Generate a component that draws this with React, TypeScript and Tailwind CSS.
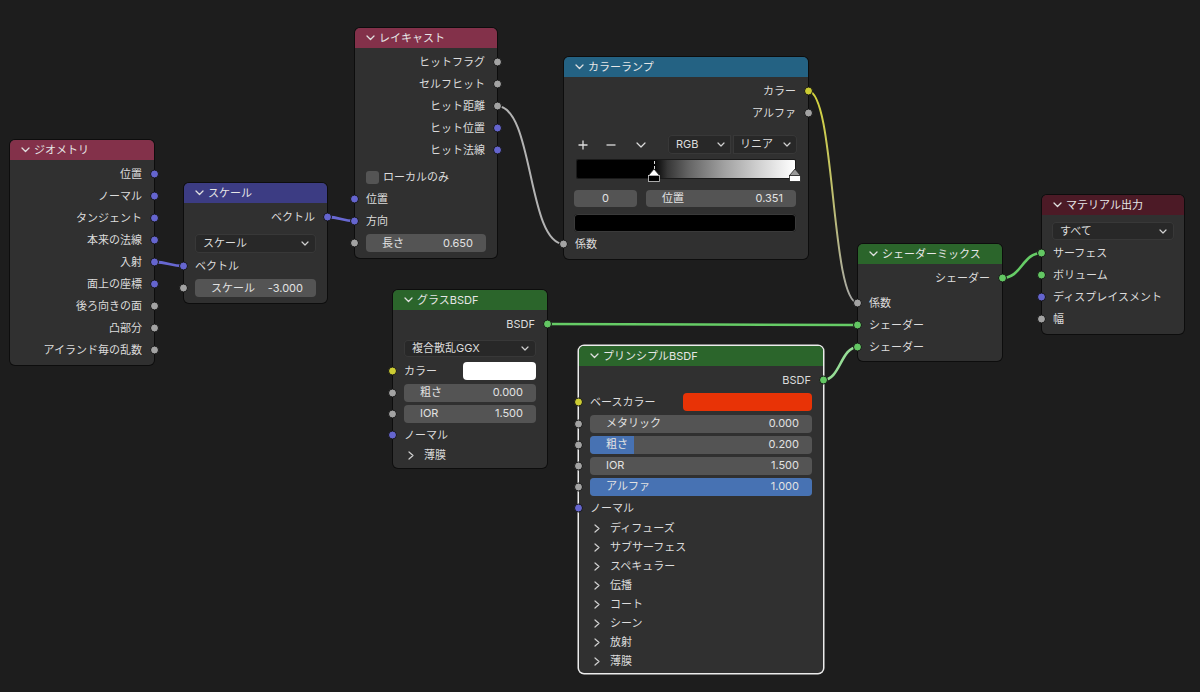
import React from "react";

type SockT = "vec" | "flt" | "col" | "sh";
const sockColor: Record<SockT, string> = {
  vec: "bg-[#6565cf]",
  flt: "bg-[#a3a3a3]",
  col: "bg-[#cccc33]",
  sh: "bg-[#63c763]",
};

function Socket({ t, side }: { t: SockT; side: "l" | "r" }) {
  return (
    <span
      className={`absolute top-1/2 -translate-y-1/2 w-[9px] h-[9px] rounded-full border border-[#171717] ${sockColor[t]} ${
        side === "r" ? "right-[-5px]" : "left-[-5px]"
      }`}
    />
  );
}

function DownSmall() {
  return (
    <svg width="8" height="5" viewBox="0 0 8 5" className="shrink-0">
      <polyline points="1,1 4,4 7,1" fill="none" stroke="#d0d0d0" strokeWidth="1.2" strokeLinecap="round" strokeLinejoin="round" />
    </svg>
  );
}

function Node({
  pos,
  head,
  title,
  selected,
  children,
}: {
  pos: string;
  head: string;
  title: string;
  selected?: boolean;
  children: React.ReactNode;
}) {
  return (
    <div
      className={`absolute ${pos} rounded-[5px] bg-[#303030] ${
        selected ? "shadow-[0_0_0_1.5px_#ececec]" : "shadow-[0_0_0_1px_rgba(0,0,0,0.55)]"
      }`}
    >
      <div className={`h-[20px] rounded-t-[5px] ${head} flex items-center pl-[11px] text-[#e6e6e6]`}>
        <svg width="9" height="6" viewBox="0 0 9 6" className="shrink-0">
          <polyline points="1,1 4.5,4.5 8,1" fill="none" stroke="#e0e0e0" strokeWidth="1.3" strokeLinecap="round" strokeLinejoin="round" />
        </svg>
        <span className="ml-[4px]">{title}</span>
      </div>
      {children}
    </div>
  );
}

function Out({ label, t }: { label: string; t: SockT }) {
  return (
    <div className="relative h-[22px] flex items-center justify-end pr-[12px]">
      <span>{label}</span>
      <Socket t={t} side="r" />
    </div>
  );
}

function In({ label, t, cls = "h-[22px]" }: { label: string; t: SockT; cls?: string }) {
  return (
    <div className={`relative ${cls} flex items-center pl-[11px]`}>
      <span>{label}</span>
      <Socket t={t} side="l" />
    </div>
  );
}

function Slider({
  label,
  value,
  fill = 0,
  cls = "h-[21px]",
}: {
  label: string;
  value: string;
  fill?: number;
  cls?: string;
}) {
  return (
    <div className={`relative ${cls} flex items-center px-[11px]`}>
      <Socket t="flt" side="l" />
      <div className="relative h-[18px] w-full rounded-[4px] bg-[#545454] overflow-hidden">
        {fill > 0 && <div className="absolute inset-y-0 left-0 bg-[#4772b3]" style={{ width: `${fill * 100}%` }} />}
        <div className="relative h-full flex items-center justify-between pl-[16px] pr-[13px] text-[#e2e2e2]">
          <span>{label}</span>
          <span>{value}</span>
        </div>
      </div>
    </div>
  );
}

function Dropdown({ label, cls }: { label: string; cls: string }) {
  return (
    <div
      className={`${cls} rounded-[4px] bg-[#282828] shadow-[inset_0_0_0_1px_#383838] flex items-center justify-between pl-[8px] pr-[7px]`}
    >
      <span>{label}</span>
      <DownSmall />
    </div>
  );
}

function ColorRow({ label, swatch, sw }: { label: string; swatch: string; sw: string }) {
  return (
    <div className="relative h-[22px] flex items-center pl-[11px] pr-[11px]">
      <Socket t="col" side="l" />
      <span>{label}</span>
      <div className={`ml-auto h-[18px] ${sw} rounded-[4px] ${swatch}`} />
    </div>
  );
}

function Panel({ label }: { label: string }) {
  return (
    <div className="h-[19px] flex items-center pl-[15px]">
      <svg width="6" height="9" viewBox="0 0 6 9" className="shrink-0">
        <polyline points="1,1 5,4.5 1,8" fill="none" stroke="#d0d0d0" strokeWidth="1.2" strokeLinecap="round" strokeLinejoin="round" />
      </svg>
      <span className="ml-[10px]">{label}</span>
    </div>
  );
}

function wire(x1: number, y1: number, x2: number, y2: number, k = 0.5) {
  const d = Math.abs(x2 - x1) * k;
  return `M${x1},${y1} C${x1 + d},${y1} ${x2 - d},${y2} ${x2},${y2}`;
}

function Wires() {
  return (
    <svg className="absolute inset-0 pointer-events-none" width="1200" height="692" viewBox="0 0 1200 692">
      <defs>
        <linearGradient id="colw" gradientUnits="userSpaceOnUse" x1="808" y1="91" x2="858" y2="303">
          <stop offset="0" stopColor="#d4d43a" />
          <stop offset="1" stopColor="#a8a8a8" />
        </linearGradient>
      </defs>
      <path d={wire(154, 262, 184, 266)} stroke="#6868d2" strokeWidth="2.8" fill="none" />
      <path d={wire(327, 217, 355, 221)} stroke="#6868d2" strokeWidth="2.8" fill="none" />
      <path d={wire(497, 106, 564, 244, 0.55)} stroke="#b3b3b3" strokeWidth="2" fill="none" />
      <path d={wire(808, 91, 858, 303, 0.55)} stroke="url(#colw)" strokeWidth="2" fill="none" />
      <path d={wire(547, 324, 858, 325)} stroke="#66cc66" strokeWidth="2.6" fill="none" />
      <path d={wire(823, 380, 858, 347)} stroke="#96dd96" strokeWidth="2.6" fill="none" />
      <path d={wire(1002, 278, 1042, 253)} stroke="#66cc66" strokeWidth="2.6" fill="none" />
    </svg>
  );
}

function Marker({ sel }: { sel?: boolean }) {
  return (
    <svg width="12" height="14" viewBox="0 0 12 14">
      <polygon points="0.5,7.5 6,1 11.5,7.5" fill={sel ? "#ffffff" : "#9a9a9a"} stroke="#222" strokeWidth="0.8" />
      <rect x="0.5" y="7.5" width="11" height="6" fill={sel ? "#000000" : "#ffffff"} stroke={sel ? "#cfcfcf" : "#222"} strokeWidth="0.8" />
    </svg>
  );
}

export default function App() {
  return (
    <div className="relative w-[1200px] h-[692px] overflow-hidden bg-[#1d1d1d] text-[11px] leading-none text-[#dcdcdc] font-['Inter','Noto_Sans_CJK_JP',sans-serif]">
      <Wires />

      {/* ジオメトリ */}
      <Node pos="left-[10px] top-[140px] w-[144px]" head="bg-[#83314a]" title="ジオメトリ">
        <div className="pt-[3px] pb-[4px]">
          <Out label="位置" t="vec" />
          <Out label="ノーマル" t="vec" />
          <Out label="タンジェント" t="vec" />
          <Out label="本来の法線" t="vec" />
          <Out label="入射" t="vec" />
          <Out label="面上の座標" t="vec" />
          <Out label="後ろ向きの面" t="flt" />
          <Out label="凸部分" t="flt" />
          <Out label="アイランド毎の乱数" t="flt" />
        </div>
      </Node>

      {/* スケール */}
      <Node pos="left-[184px] top-[183px] w-[143px]" head="bg-[#3c3c83]" title="スケール">
        <div className="pt-[3px] pb-[4px]">
          <Out label="ベクトル" t="vec" />
          <div className="mt-[6px] px-[11px]">
            <Dropdown label="スケール" cls="h-[19px]" />
          </div>
          <div className="mt-[2px]">
            <In label="ベクトル" t="vec" />
          </div>
          <Slider label="スケール" value="-3.000" cls="h-[22px]" />
        </div>
      </Node>

      {/* レイキャスト */}
      <Node pos="left-[355px] top-[28px] w-[142px]" head="bg-[#83314a]" title="レイキャスト">
        <div className="pt-[3px] pb-[4px]">
          <Out label="ヒットフラグ" t="flt" />
          <Out label="セルフヒット" t="flt" />
          <Out label="ヒット距離" t="flt" />
          <Out label="ヒット位置" t="vec" />
          <Out label="ヒット法線" t="vec" />
          <div className="mt-[5px] h-[22px] flex items-center pl-[11px]">
            <div className="w-[13px] h-[13px] rounded-[3px] bg-[#545454]" />
            <span className="ml-[4px]">ローカルのみ</span>
          </div>
          <In label="位置" t="vec" />
          <In label="方向" t="vec" />
          <Slider label="長さ" value="0.650" cls="h-[22px]" />
        </div>
      </Node>

      {/* カラーランプ */}
      <Node pos="left-[564px] top-[57px] w-[244px]" head="bg-[#246283]" title="カラーランプ">
        <div className="pt-[3px] pb-[4px]">
          <Out label="カラー" t="col" />
          <Out label="アルファ" t="flt" />
          <div className="mt-[11px] h-[19px] flex items-center">
            <svg width="10" height="10" viewBox="0 0 10 10" className="ml-[14px] shrink-0">
              <path d="M5 0.5 V9.5 M0.5 5 H9.5" stroke="#dcdcdc" strokeWidth="1.3" />
            </svg>
            <svg width="10" height="10" viewBox="0 0 10 10" className="ml-[18px] shrink-0">
              <path d="M0.5 5 H9.5" stroke="#dcdcdc" strokeWidth="1.3" />
            </svg>
            <svg width="10" height="6" viewBox="0 0 10 6" className="ml-[20px] shrink-0">
              <polyline points="1,1 5,5 9,1" fill="none" stroke="#dcdcdc" strokeWidth="1.2" strokeLinecap="round" strokeLinejoin="round" />
            </svg>
            <div className="ml-[22px] w-[63px] h-[19px] rounded-l-[4px] bg-[#282828] shadow-[inset_0_0_0_1px_#383838] flex items-center justify-between pl-[8px] pr-[6px]">
              <span>RGB</span>
              <DownSmall />
            </div>
            <div className="ml-[2px] w-[64px] h-[19px] rounded-r-[4px] bg-[#282828] shadow-[inset_0_0_0_1px_#383838] flex items-center justify-between pl-[7px] pr-[6px]">
              <span>リニア</span>
              <DownSmall />
            </div>
          </div>
          <div className="relative mt-[6px] ml-[13px] mr-[13px] h-[18px] rounded-[1px] shadow-[0_0_0_1px_#1a1a1a] bg-[linear-gradient(90deg,#000_0%,#000_35.1%,#373737_41.6%,#656565_51.3%,#a1a1a1_67.6%,#d2d2d2_83.8%,#fff_100%)]">
            <div className="absolute left-[35.1%] top-[1px] h-[8px] border-l border-dashed border-[#dddddd]" />
            <div className="absolute left-[35.1%] top-[8px] -translate-x-1/2">
              <Marker sel />
            </div>
            <div className="absolute left-full top-[8px] -translate-x-1/2">
              <Marker />
            </div>
          </div>
          <div className="mt-[12px] h-[17px] flex">
            <div className="ml-[10px] w-[63px] h-full rounded-[4px] bg-[#545454] flex items-center justify-center text-[#e2e2e2]">0</div>
            <div className="ml-[9px] w-[150px] h-full rounded-[4px] bg-[#545454] flex items-center justify-between pl-[16px] pr-[13px] text-[#e2e2e2]">
              <span>位置</span>
              <span>0.351</span>
            </div>
          </div>
          <div className="mt-[7px] ml-[10px] mr-[12px] h-[18px] rounded-[4px] bg-black shadow-[inset_0_0_0_1px_#3a3a3a]" />
          <div className="mt-[1px]">
            <In label="係数" t="flt" />
          </div>
        </div>
      </Node>

      {/* グラスBSDF */}
      <Node pos="left-[393px] top-[290px] w-[154px]" head="bg-[#2b652b]" title="グラスBSDF">
        <div className="pt-[3px] pb-[3px]">
          <Out label="BSDF" t="sh" />
          <div className="mt-[5px] px-[11px]">
            <Dropdown label="複合散乱GGX" cls="h-[17px]" />
          </div>
          <div className="mt-[3px]">
            <ColorRow label="カラー" swatch="bg-white" sw="w-[73px]" />
          </div>
          <Slider label="粗さ" value="0.000" />
          <Slider label="IOR" value="1.500" />
          <In label="ノーマル" t="vec" />
          <Panel label="薄膜" />
        </div>
      </Node>

      {/* プリンシプルBSDF */}
      <Node pos="left-[579px] top-[346px] w-[244px]" head="bg-[#2b652b]" title="プリンシプルBSDF" selected>
        <div className="pt-[3px] pb-[2px]">
          <Out label="BSDF" t="sh" />
          <ColorRow label="ベースカラー" swatch="bg-[#e83306]" sw="w-[129px]" />
          <Slider label="メタリック" value="0.000" />
          <Slider label="粗さ" value="0.200" fill={0.2} />
          <Slider label="IOR" value="1.500" />
          <Slider label="アルファ" value="1.000" fill={1} />
          <In label="ノーマル" t="vec" />
          <Panel label="ディフューズ" />
          <Panel label="サブサーフェス" />
          <Panel label="スペキュラー" />
          <Panel label="伝播" />
          <Panel label="コート" />
          <Panel label="シーン" />
          <Panel label="放射" />
          <Panel label="薄膜" />
        </div>
      </Node>

      {/* シェーダーミックス */}
      <Node pos="left-[858px] top-[244px] w-[144px]" head="bg-[#2b652b]" title="シェーダーミックス">
        <div className="pt-[3px] pb-[3px]">
          <Out label="シェーダー" t="sh" />
          <div className="mt-[3px]">
            <In label="係数" t="flt" />
            <In label="シェーダー" t="sh" />
            <In label="シェーダー" t="sh" />
          </div>
        </div>
      </Node>

      {/* マテリアル出力 */}
      <Node pos="left-[1042px] top-[195px] w-[142px]" head="bg-[#4c1a26]" title="マテリアル出力">
        <div className="pb-[4px]">
          <div className="pt-[7px] px-[10px]">
            <Dropdown label="すべて" cls="h-[18px]" />
          </div>
          <div className="mt-[2px]">
            <In label="サーフェス" t="sh" />
            <In label="ボリューム" t="sh" />
            <In label="ディスプレイスメント" t="vec" />
            <In label="幅" t="flt" />
          </div>
        </div>
      </Node>
    </div>
  );
}
